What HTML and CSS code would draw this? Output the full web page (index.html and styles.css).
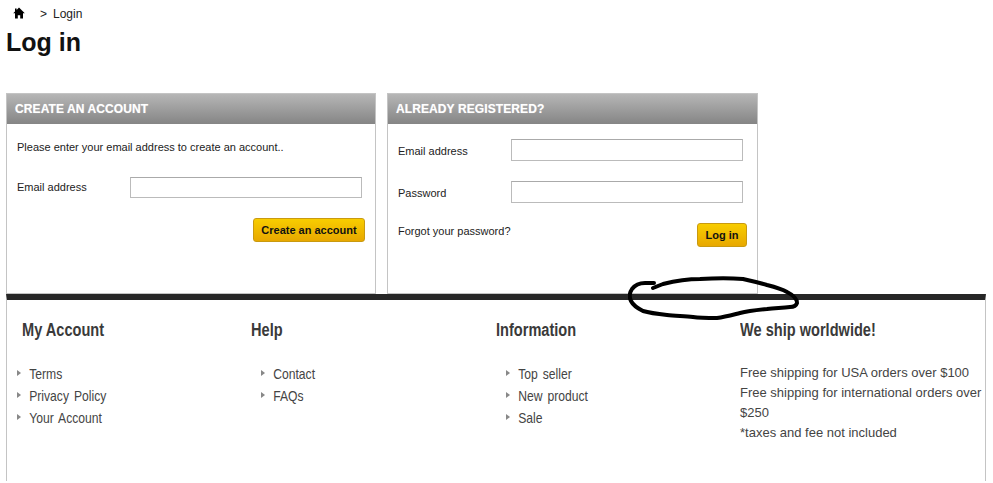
FILE: index.html
```html
<!DOCTYPE html>
<html>
<head>
    <title>Login</title>
    <link rel="stylesheet" href="styles.css">
</head>
<body>
    <div class="breadcrumb">
        <svg class="home-icon" width="12" height="12" viewBox="0 0 12 12"><path d="M6 .6 11.800 6.200H10V11.400H7.200V8.200H4.800V11.400H2V6.200H.2L2 4.500V1.400H3.600V3Z" fill="#000"/></svg>
        <span class="crumb-sep">&gt;</span>
        <span>Login</span>
    </div>
    <h1>Log in</h1>

    <div class="boxes">
        <div class="box">
            <h3>CREATE AN ACCOUNT</h3>
            <div class="box-body">
                <p class="intro">Please enter your email address to create an account..</p>
                <div class="field">
                    <label>Email address</label>
                    <input type="text">
                </div>
                <div class="actions">
                    <button class="create-btn">Create an account</button>
                </div>
            </div>
        </div>
        <div class="box box-login">
            <h3>ALREADY REGISTERED?</h3>
            <div class="box-body">
                <div class="field">
                    <label>Email address</label>
                    <input type="text">
                </div>
                <div class="field">
                    <label>Password</label>
                    <input type="password">
                </div>
                <div class="forgot-row">
                    <a href="#">Forgot your password?</a>
                    <button class="login-btn">Log in</button>
                </div>
            </div>
        </div>
    </div>

    <div class="footer">
        <div class="col col-account">
            <h4>My Account</h4>
            <ul>
                <li>Terms</li>
                <li>Privacy Policy</li>
                <li>Your Account</li>
            </ul>
        </div>
        <div class="col col-help">
            <h4>Help</h4>
            <ul>
                <li>Contact</li>
                <li>FAQs</li>
            </ul>
        </div>
        <div class="col col-info">
            <h4>Information</h4>
            <ul>
                <li>Top seller</li>
                <li>New product</li>
                <li>Sale</li>
            </ul>
        </div>
        <div class="col col-ship">
            <h4>We ship worldwide!</h4>
            <p>Free shipping for USA orders over $100<br>Free shipping for international orders over $250<br>*taxes and fee not included</p>
        </div>
    </div>

    <!-- marker scribble on top of the page -->
    <svg class="scribble" width="172" height="48" viewBox="628 275 172 48">
        <path d="M653 288 663 284C675 281 688 279 700 279C715 278 732 278 743 279C752 281 760 283 767 285C775 287 782 289 787 292C793 295 797 299 797 303C796 306 794 307 790 307C782 308 775 308 767 309C757 310 748 311 740 313C732 315 725 317 717 318C708 318 700 318 693 317C684 316 675 316 667 315C658 314 650 313 643 311C637 308 633 305 631 301C629 297 630 292 632 289C635 285 639 283 645 283C648 283 651 283 654 283" fill="none" stroke="#000" stroke-width="4" stroke-linecap="round" stroke-linejoin="round"/>
    </svg>
</body>
</html>
```

FILE: styles.css
```css
body {
    font-family: "Liberation Sans", Arial, sans-serif;
    background-color: #fff;
    color: #111;
    margin: 0;
    padding: 0;
    height: 483px;
    overflow: hidden;
    position: relative;
}
.breadcrumb {
    display: flex;
    align-items: center;
    height: 14px;
    padding: 6px 0 0 13px;
    font-size: 12px;
    color: #222;
}
.breadcrumb span {
    padding-top: 2px;
}
.home-icon {
    margin-right: 15px;
}
.crumb-sep {
    margin-right: 6px;
}
h1 {
    font-size: 25px;
    line-height: 28px;
    margin: 8px 0 0 6px;
    color: #111;
}
.boxes {
    display: flex;
    gap: 11px;
    margin: 37px 0 0 6px;
    height: 201px;
}
.box {
    width: 370px;
    box-sizing: border-box;
    border: 1px solid #c4c4c4;
}
.box-login {
    width: 371px;
}
.box h3 {
    margin: 0;
    height: 30px;
    line-height: 31px;
    padding-left: 8px;
    font-size: 12px;
    letter-spacing: 0.1px;
    color: #fff;
    text-shadow: 0 0 1px rgba(255, 255, 255, 0.5);
    background: linear-gradient(#b6b6b6, #858585);
}
.box-body {
    padding: 0 10px;
    font-size: 11px;
    color: #222;
}
.intro {
    margin: 0;
    padding-top: 17px;
    line-height: 13px;
}
.field {
    display: flex;
    align-items: center;
    height: 22px;
    margin-top: 22px;
}
.field label {
    width: 113px;
    flex-shrink: 0;
}
.field input {
    width: 232px;
    height: 21px;
    box-sizing: border-box;
    border: 1px solid #bbb;
    border-top-color: #aaa;
    background: #fff;
    padding: 0;
}
.box-login .field input {
    height: 22px;
}
.box-login .field label {
    padding-top: 2px;
}
.box-login .field:first-child {
    margin-top: 15px;
}
.box-login .field + .field {
    margin-top: 20px;
}
.actions {
    display: flex;
    justify-content: flex-end;
    margin-top: 20px;
}
button {
    font-family: "Liberation Sans", Arial, sans-serif;
    font-size: 11px;
    font-weight: bold;
    color: #111;
    height: 24px;
    padding: 0;
    border: 1px solid #c99a10;
    border-radius: 3px;
    background: linear-gradient(#f8cd00, #e8a800);
}
.create-btn {
    width: 112px;
}
.login-btn {
    width: 50px;
}
.forgot-row {
    display: flex;
    justify-content: space-between;
    align-items: flex-start;
    margin-top: 21px;
}
.forgot-row a {
    color: #222;
    text-decoration: none;
    line-height: 15px;
}
.forgot-row .login-btn {
    margin-top: -1px;
}
.footer {
    display: flex;
    margin-left: 6px;
    width: 980px;
    height: 187px;
    box-sizing: border-box;
    border-top: 6px solid #272727;
    border-left: 1px solid #c4c4c4;
    border-right: 1px solid #c4c4c4;
    color: #444;
}
/* no narrow face installed, so the footer titles and links get squeezed */
.col h4 {
    font-size: 18px;
    line-height: 22px;
    margin: 19px 0 0;
    color: #3a3a3a;
    white-space: nowrap;
    transform: scaleX(0.81);
    transform-origin: left;
}
.col ul {
    list-style: none;
    margin: 22px 0 0;
    padding: 0;
}
.col li {
    position: relative;
    font-size: 15px;
    line-height: 22px;
    padding-left: 15px;
    word-spacing: 2px;
    color: #444;
    white-space: nowrap;
    transform: scaleX(0.81);
    transform-origin: left;
}
.col li::before {
    content: "";
    position: absolute;
    left: 0;
    top: 7px;
    border-left: 5px solid #888;
    border-top: 3.500px solid transparent;
    border-bottom: 3.500px solid transparent;
}
.col-account {
    width: 244px;
    padding-left: 15px;
    box-sizing: border-box;
}
.col-account ul {
    margin-left: -5px;
}
.col-help {
    width: 245px;
}
.col-help ul {
    margin-left: 10px;
}
.col-info {
    width: 244px;
}
.col-info ul {
    margin-left: 10px;
}
.col-ship {
    width: 245px;
}
.col-ship p {
    margin: 22px 0 0;
    font-size: 13px;
    line-height: 20px;
    color: #444;
}
.scribble {
    position: absolute;
    left: 628px;
    top: 275px;
}
```
